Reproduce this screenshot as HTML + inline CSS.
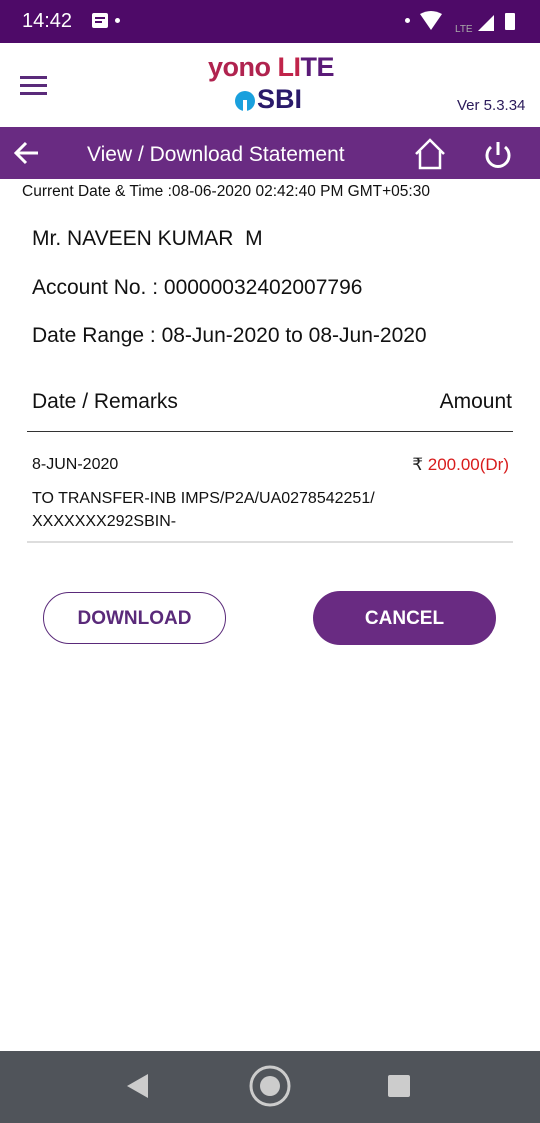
<!DOCTYPE html>
<html><head><meta charset="utf-8"><style>
*{margin:0;padding:0;box-sizing:border-box}
body{width:540px;height:1123px;position:relative;background:#fff;font-family:"Liberation Sans","DejaVu Sans",sans-serif;overflow:hidden;color:#111}
.abs{position:absolute}
</style></head><body>
<div class="abs" style="left:0;top:0;width:540px;height:43px;background:#4e0a68"></div>
<div class="abs" style="left:22px;top:10px;color:#fff;font-size:20px;">14:42</div>
<div class="abs" style="left:92px;top:13px;width:16px;height:15px;background:#fff;border-radius:2px"></div>
<div class="abs" style="left:95px;top:17px;width:10px;height:2px;background:#4e0a68"></div>
<div class="abs" style="left:95px;top:21px;width:7px;height:2px;background:#4e0a68"></div>
<div class="abs" style="left:115px;top:18px;width:5px;height:5px;background:#fff;border-radius:50%"></div>
<div class="abs" style="left:405px;top:18px;width:5px;height:5px;background:#fff;border-radius:50%"></div>
<svg class="abs" style="left:418px;top:10px" width="120" height="24"><path d="M2 4 Q13 -2 24 4 L13 20 Z" fill="#fff"/><text x="37" y="22" fill="#aaa" font-size="10" font-family="Liberation Sans">LTE</text><path d="M60 21 L76 5 L76 21 Z" fill="#fff"/><rect x="87" y="3" width="10" height="17" rx="1" fill="#fff"/></svg>
<div class="abs" style="left:20px;top:76px;width:27px;height:3px;background:#5a2a7a;box-shadow:0 8px 0 #5a2a7a,0 16px 0 #5a2a7a"></div>
<div class="abs" style="left:208px;top:52px;font-size:27px;font-weight:bold;letter-spacing:-0.5px;"><span style="color:#b0234f">yono</span> <span style="color:#c0244a">LI</span><span style="color:#5a1a78">TE</span></div>
<div class="abs" style="left:235px;top:91px;width:20px;height:20px;border-radius:50%;background:#1aa0dd"></div>
<div class="abs" style="left:243px;top:100px;width:4px;height:11px;background:#fff"></div>
<div class="abs" style="left:257px;top:84px;font-size:27px;font-weight:bold;color:#2a1a6a">SBI</div>
<div class="abs" style="left:457px;top:97px;font-size:15px;color:#2a1a5a">Ver 5.3.34</div>
<div class="abs" style="left:0;top:127px;width:540px;height:52px;background:#692b82"></div>
<svg class="abs" style="left:12px;top:140px" width="30" height="26"><path d="M26 13 H4 M14 3 L4 13 L14 23" stroke="#fff" stroke-width="3" fill="none"/></svg>
<div class="abs" style="left:87px;top:143px;color:#fff;font-size:21px">View / Download Statement</div>
<svg class="abs" style="left:413px;top:138px" width="34" height="32"><path d="M3 16 L17 2 L31 16 M7 13 V30 H27 V13" stroke="#fff" stroke-width="2.5" fill="none"/></svg>
<svg class="abs" style="left:482px;top:140px" width="32" height="30"><path d="M9 7 A11 11 0 1 0 23 7" stroke="#fff" stroke-width="3" fill="none"/><path d="M16 2 V15" stroke="#fff" stroke-width="3"/></svg>
<div class="abs" style="left:22px;top:183px;font-size:15.5px">Current Date &amp; Time :08-06-2020 02:42:40 PM GMT+05:30</div>
<div class="abs" style="left:32px;top:227px;font-size:21px">Mr. NAVEEN KUMAR&nbsp; M</div>
<div class="abs" style="left:32px;top:276px;font-size:21px">Account No. : 00000032402007796</div>
<div class="abs" style="left:32px;top:324px;font-size:21px">Date Range : 08-Jun-2020 to 08-Jun-2020</div>
<div class="abs" style="left:32px;top:390px;font-size:21px">Date / Remarks</div>
<div class="abs" style="right:28px;top:390px;font-size:21px">Amount</div>
<div class="abs" style="left:27px;top:431px;width:486px;height:1px;background:#333"></div>
<div class="abs" style="left:32px;top:456px;font-size:16px">8-JUN-2020</div>
<div class="abs" style="right:31px;top:455px;font-size:17px;color:#d81c1c"><span style="color:#222">₹</span> 200.00(Dr)</div>
<div class="abs" style="left:32px;top:487px;font-size:16px;line-height:23px">TO TRANSFER-INB IMPS/P2A/UA0278542251/<br>XXXXXXX292SBIN-</div>
<div class="abs" style="left:27px;top:541px;width:486px;height:2px;background:#ddd"></div>
<div class="abs" style="left:43px;top:592px;width:183px;height:52px;border:1.5px solid #5a2a7a;border-radius:26px;color:#5a2a7a;font-weight:bold;font-size:19px;text-align:center;line-height:51px">DOWNLOAD</div>
<div class="abs" style="left:313px;top:591px;width:183px;height:54px;background:#692b82;border-radius:27px;color:#fff;font-weight:bold;font-size:19px;text-align:center;line-height:56px">CANCEL</div>
<div class="abs" style="left:0;top:1051px;width:540px;height:72px;background:#50545a"></div>
<svg class="abs" style="left:0;top:1051px" width="540" height="72"><path d="M127 35 L148 23 L148 47 Z" fill="#ccc"/><circle cx="270" cy="35" r="19" stroke="#ccc" stroke-width="3" fill="none"/><circle cx="270" cy="35" r="10" fill="#ccc"/><rect x="388" y="24" width="22" height="22" rx="2" fill="#ccc"/></svg>
</body></html>
